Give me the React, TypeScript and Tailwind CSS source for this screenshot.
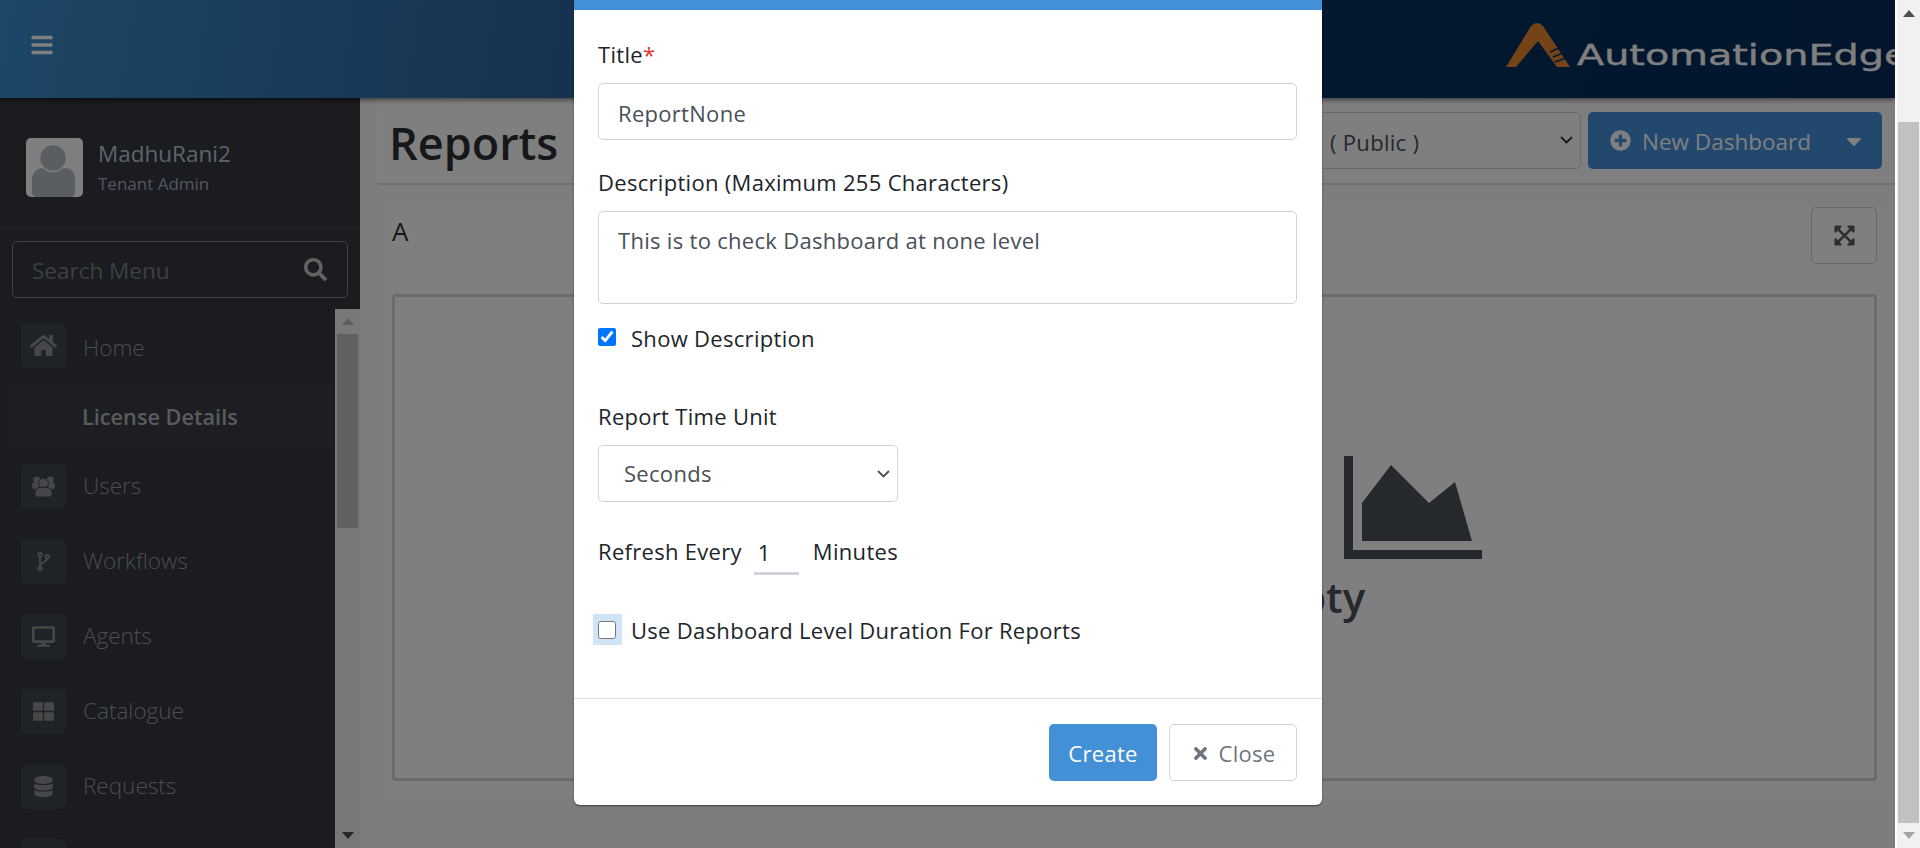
import React from 'react';
import {
  FaBars,
  FaCaretDown,
  FaDatabase,
  FaDesktop,
  FaExpandArrowsAlt,
  FaHome,
  FaPlusCircle,
  FaSearch,
  FaThLarge,
  FaTimes,
} from 'react-icons/fa';

const font = { fontFamily: '"Open Sans", "Noto Sans", sans-serif' };

const ForkIcon = () => (
  <svg width="13" height="19" viewBox="0 0 13 19" fill="none" stroke="currentColor" strokeWidth="1.8">
    <circle cx="3" cy="2.6" r="1.8" />
    <circle cx="3" cy="16.4" r="1.8" />
    <circle cx="10.2" cy="4.6" r="1.8" />
    <path d="M3 4.4v10M10.2 6.4c0 4-7.2 3.6-7.2 7.6" />
  </svg>
);

const UsersIcon = () => (
  <svg width="23" height="21" viewBox="0 0 23 21" fill="currentColor">
    <circle cx="4.7" cy="4" r="3.4" />
    <circle cx="18.3" cy="4" r="3.4" />
    <rect x="0" y="6.4" width="8" height="6.8" rx="2.6" />
    <rect x="15" y="6.4" width="8" height="6.8" rx="2.6" />
    <circle cx="11.5" cy="7.3" r="5" stroke="#3f444c" />
    <path d="M3 19V16c0-3 2.5-4.6 5-4.6h7c2.5 0 5 1.6 5 4.6v3c0 1-1 2-2 2H5c-1 0-2-1-2-2z" stroke="#3f444c" />
  </svg>
);

const navItems = [
  { label: 'Users', icon: <UsersIcon /> },
  { label: 'Workflows', icon: <ForkIcon /> },
  { label: 'Agents', icon: <FaDesktop size={23} /> },
  { label: 'Catalogue', icon: <FaThLarge size={21} /> },
  { label: 'Requests', icon: <FaDatabase size={21} /> },
  { label: '', icon: null },
];

const NavRow = ({ label, icon, textClass = '-mt-[2px]' }: { label: string; icon: React.ReactNode; textClass?: string }) => (
  <div className="flex items-center gap-[17px] h-[45px] mb-[30px] pl-[21px]">
    <div className="w-[45px] h-[45px] shrink-0 rounded-[5px] bg-[#3f444c] flex items-center justify-center text-[#8c8f93]">
      {icon}
    </div>
    <span className={`text-[22.5px] font-light text-[#989a9e] ${textClass}`}>{label}</span>
  </div>
);

const ScrollArrow = ({ up, className }: { up?: boolean; className: string }) => (
  <div className={`h-0 w-0 border-x-[6px] border-x-transparent ${up ? 'border-b-[7px]' : 'border-t-[7px]'} ${className}`} />
);

const Chevron = ({ className }: { className: string }) => (
  <svg viewBox="0 0 13 8" width="13" height="8" fill="none" stroke="currentColor" strokeWidth="1.8" className={className}>
    <path d="M1 1l5.5 5.5L12 1" />
  </svg>
);

const Sidebar = () => (
  <aside className="w-[360px] shrink-0 h-[750px] bg-[#34383f] flex flex-col overflow-hidden">
    <div className="h-[130px] shrink-0 flex items-start pt-[40px] pl-[26px] border-b border-[#43474e]">
      <div className="w-[57px] h-[59px] rounded-[5px] bg-[#ffffff] overflow-hidden">
        <svg viewBox="0 0 57 59" width="57" height="59" fill="#b4bac4">
          <path d="M6 42c0-8 5-12 12-12h20c7 0 11 4 11 12v12c0 3-2 5-5 5H11c-3 0-5-2-5-5z" />
          <circle cx="27" cy="20" r="13.5" stroke="#ffffff" strokeWidth="1.5" />
        </svg>
      </div>
      <div className="ml-[15px] -mt-[1px]">
        <div className="text-[22.5px] leading-[32px] text-[#bcc8d8] mt-[1px]">MadhuRani2</div>
        <div className="text-[17px] leading-[26px] text-[#aaaac4] mt-[1px]">Tenant Admin</div>
      </div>
    </div>
    <div className="mx-[12px] mt-[13px] h-[57px] shrink-0 rounded-[5px] border border-[#84868c] flex items-center justify-between pl-[19px] pr-[20px]">
      <span className="text-[22.5px] text-[#7a7f87] mt-[2px]">Search Menu</span>
      <FaSearch size={23} className="text-[#c4c4c4]" />
    </div>
    <div className="flex flex-1 mt-[11px] min-h-0">
      <div className="flex-1 min-w-0 pt-[14px] overflow-hidden">
        <NavRow label="Home" icon={<FaHome size={27} />} textClass="mt-[5px]" />
        <div className="-mt-[13px] ml-[8px] h-[63px] flex items-center pl-[74px] pt-[2px] bg-[#383c42] mb-[16px] text-[21.7px] font-semibold text-[#b4b6ba]">
          License Details
        </div>
        {navItems.map((item) => (
          <NavRow key={item.label} label={item.label} icon={item.icon} />
        ))}
      </div>
      <div className="w-[25px] shrink-0 bg-[#f1f1f1] flex flex-col items-center pl-[2px] pr-[2px]">
        <div className="h-[25px] flex items-center justify-center">
          <ScrollArrow up className="border-b-[#bcbcbc]" />
        </div>
        <div className="w-full h-[194px] bg-[#c1c1c1]" />
        <div className="flex-1" />
        <div className="h-[25px] flex items-center justify-center">
          <ScrollArrow className="border-t-[#505050]" />
        </div>
      </div>
    </div>
  </aside>
);

const MainArea = () => (
  <main className="flex-1 min-w-0 bg-[#f9fcfb] h-[750px] overflow-hidden">
    <div className="ml-[17px] h-[87px] bg-[#ffffff] border-b-2 border-[#dfe0df] flex items-center justify-between pr-[13px]">
      <h1 className="pl-[12px] text-[45px] font-semibold text-[#2b2e33] mt-[4px]">Reports</h1>
      <div className="flex items-center gap-[7px]">
        <div className="relative">
          <select
            defaultValue="a"
            className="block w-[560px] h-[57px] appearance-none rounded-[5px] border border-[#d4d4d4] bg-[#ffffff] text-[22px] tracking-[0.3px] text-[#4a5058] pl-[308px] pt-[3px]"
          >
            <option value="a">( Public )</option>
          </select>
          <Chevron className="absolute right-[8px] top-[24px] text-[#2b2e33]" />
        </div>
        <div className="w-[294px] h-[57px] rounded-[5px] bg-[#4490dc] flex items-center justify-between pl-[22px] pr-[16px] text-[#ffffff]">
          <div className="flex items-center gap-[11px] text-[22.5px]">
            <FaPlusCircle size={21} />
            <span className="mt-[3px]">New Dashboard</span>
          </div>
          <FaCaretDown size={24} />
        </div>
      </div>
    </div>
    <div className="ml-[24px] mr-[11px] mt-[22px] h-[590px] bg-[#ffffff] pl-[8px] pr-[7px]">
      <div className="flex justify-between h-[87px]">
        <span className="text-[26px] leading-[48px] text-[#2b2e33]">A</span>
        <div className="w-[66px] h-[57px] rounded-[5px] border border-[#cfcfcf] flex items-center justify-center text-[#565b61]">
          <FaExpandArrowsAlt size={23} />
        </div>
      </div>
      <div className="h-[487px] rounded-[4px] border-[3px] border-[#d4d6da] flex flex-col items-center pt-[159px]">
        <svg viewBox="0 0 138 103" width="138" height="103" fill="#4a5058" className="ml-[557px] shrink-0">
          <path d="M0 0h9v94h129v9H0z" />
          <path d="M18 47 47 9l38 38 26-21 17 59H18z" />
        </svg>
        <div className="ml-[56px] text-[42px] leading-[56px] font-semibold text-[#4a5058] mt-[10px]">Dashboard is Empty</div>
      </div>
    </div>
  </main>
);

const Modal = () => (
  <div className="absolute left-[574px] top-0 w-[748px] h-[805px] bg-[#ffffff] rounded-b-[6px] flex flex-col border-t-[10px] border-[#4390d6] shadow-[0_1px_2px_rgba(0,0,0,0.5)]">
    <div className="pl-[24px] pr-[25px] flex-1 text-[#212529] text-[22px] tracking-[0.3px]">
      <label className="block mt-[27px] leading-[34px]">
        Title<span className="text-[#e3342f]">*</span>
      </label>
      <input
        defaultValue="ReportNone"
        className="block w-full h-[57px] mt-[12px] rounded-[5px] border border-[#ced4da] px-[19px] pt-[2px] text-[#495057]"
      />
      <label className="block mt-[25px] leading-[34px]">Description (Maximum 255 Characters)</label>
      <textarea
        defaultValue="This is to check Dashboard at none level"
        className="block w-full h-[93px] mt-[12px] rounded-[5px] border border-[#ced4da] px-[19px] pt-[12px] text-[#495057] resize-none"
      />
      <div className="flex items-center mt-[24px] h-[18px]">
        <input type="checkbox" defaultChecked className="w-[18px] h-[18px] m-0" />
        <span className="ml-[15px] mt-[3px]">Show Description</span>
      </div>
      <label className="block mt-[53px] leading-[34px]">Report Time Unit</label>
      <div className="relative w-[300px] mt-[12px]">
        <select
          defaultValue="s"
          className="block w-full h-[57px] appearance-none rounded-[5px] border border-[#ced4da] pl-[25px] bg-[#ffffff] text-[#495057]"
        >
          <option value="s">Seconds</option>
        </select>
        <Chevron className="absolute right-[8px] top-[25px] text-[#495057]" />
      </div>
      <div className="flex items-center mt-[33px] h-[40px]">
        <span className="-mt-[8px]">Refresh Every</span>
        <input
          defaultValue="1"
          className="w-[45px] ml-[12px] h-[40px] border-b-[3px] border-[#ced4da] px-[4px] pb-[4px]"
        />
        <span className="ml-[14px] -mt-[8px]">Minutes</span>
      </div>
      <div className="flex items-center mt-[39px] -ml-[5px] h-[31px]">
        <span className="w-[29px] h-[31px] bg-[#d0e4f7] flex items-center justify-center">
          <input type="checkbox" className="w-[18px] h-[18px] m-0 -ml-[2px]" />
        </span>
        <span className="ml-[9px] mt-[1px]">Use Dashboard Level Duration For Reports</span>
      </div>
    </div>
    <div className="h-[107px] shrink-0 border-t border-[#dee2e6] flex justify-end items-start pt-[25px] pr-[25px] gap-[12px] text-[22px] tracking-[0.3px]">
      <button className="w-[108px] h-[57px] rounded-[5px] bg-[#4390d6] text-[#ffffff] pt-[1px]">Create</button>
      <button className="w-[128px] h-[57px] rounded-[5px] border border-[#ced4da] text-[#6c757d] flex items-center justify-center gap-[9px] pt-[1px]">
        <FaTimes size={19} />
        Close
      </button>
    </div>
  </div>
);

const App: React.FC = () => (
  <div className="flex h-[848px] w-full overflow-hidden bg-[#ffffff]" style={font}>
    <div className="relative flex-1 min-w-0 overflow-hidden">
      <header className="relative h-[98px] bg-[linear-gradient(100deg,#3c8ccc_0%,#2b66a0_30%,#063460_68%,#042a5a_100%)] shadow-[0_2px_5px_rgba(0,0,0,0.5)] flex items-center justify-between pl-[30px]">
        <FaBars size={24} className="text-[#ffffff] -mt-[8px]" />
        <div className="flex items-end w-[390px] shrink-0 -mt-[10px]">
          <svg viewBox="0 0 66 45" width="66" height="45" className="shrink-0">
            <path d="M1 45 26 4q6-6 12 0l27 41H52L33 19 11 45z" fill="#e8862f" />
            <path d="M45 30l9-4M48 35l10-4M50 40l11-4" stroke="#063460" strokeWidth="1.8" />
          </svg>
          <span
            className="inline-block ml-[6px] text-[29px] leading-[34px] text-[#ffffff] whitespace-nowrap origin-left scale-x-[1.37] translate-y-[5px] [-webkit-text-stroke:0.4px_#ffffff]"
            style={{ fontFamily: '"DejaVu Sans", sans-serif' }}
          >
            AutomationEdge
          </span>
        </div>
      </header>
      <div className="flex">
        <Sidebar />
        <MainArea />
      </div>
      <div className="absolute inset-0 bg-[#000000]/50" />
      <Modal />
    </div>
    <div className="w-[25px] shrink-0 bg-[#f1f1f1] border-l-2 border-[#ffffff] flex flex-col items-center">
      <div className="h-[27px] flex items-center justify-center">
        <ScrollArrow up className="border-b-[#505050]" />
      </div>
      <div className="h-[95px]" />
      <div className="w-[21px] h-[701px] bg-[#c1c1c1]" />
      <div className="flex-1 flex items-center justify-center">
        <ScrollArrow className="border-t-[#a3a3a3]" />
      </div>
    </div>
  </div>
);

export default App;
